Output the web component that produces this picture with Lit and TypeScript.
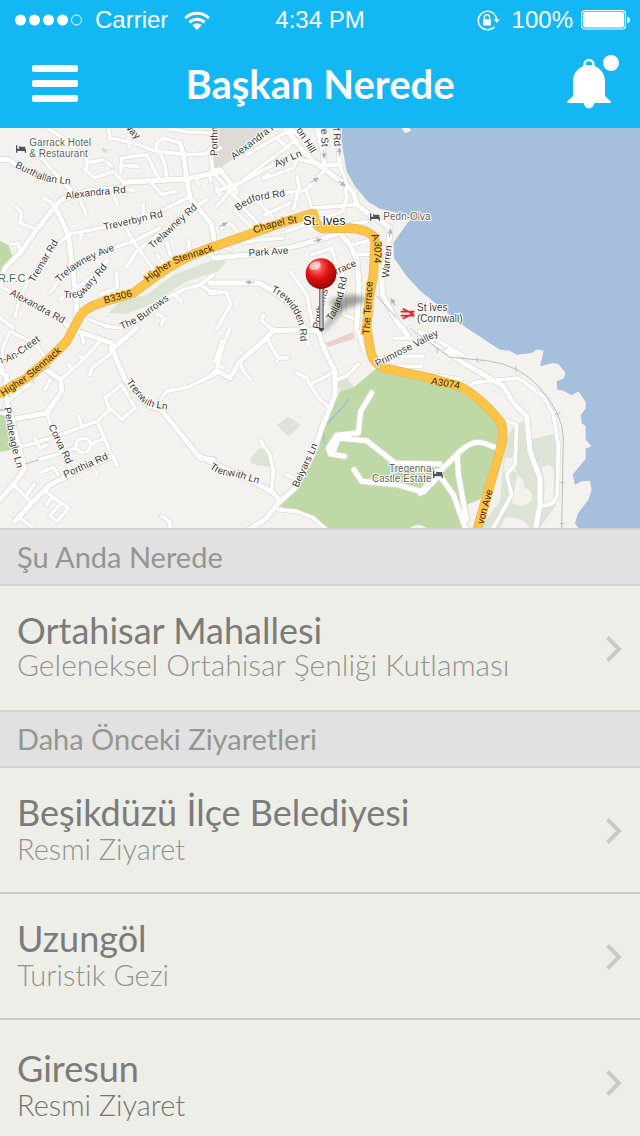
import { LitElement, html, svg, css } from "lit";
import { customElement, property } from "lit/decorators.js";

/* ---------- map data: the drawing uses a 1920 x 1200 grid ---------- */

interface Tile {
  x: number;
  y: number;
  major: string;
  minor: string;
}

const tiles: Tile[] = [
  {
    x: 0,
    y: 0,
    major:
      "M0 470L15 420L60 375L110 305L165 235L185 215L260 190L360 180 M165 235L205 320L212 380L225 480L232 580 M370 163L480 157L560 153L665 130 M540 45L550 80L560 150L570 210L635 290L648 370 M0 95L22 93L60 118L130 145L190 160L215 190",
    minor:
      "M0 475L100 525L180 575L210 600 M110 75L215 190L240 215L258 258 M130 210L150 220L165 235 M110 305L60 285L65 255L48 237 M60 370L55 345L35 348 M205 320L300 300L480 250L560 210 M205 320L150 370L90 450L60 510L45 565 M150 495L190 440L320 365L400 340L480 300 M180 515L270 450L325 395 M245 320L240 338 M375 295L400 340L465 430 M378 420L410 370L430 355L580 240L620 215 M430 228L430 255 M350 435L352 480L300 500 M470 380L490 405 M500 345L513 385 M565 338L570 365 M340 195L352 228 M370 160L376 200 M374 182L402 188 M370 163L340 130L285 150L255 125L265 105L310 95L335 115 M362 135L365 90L440 80L475 150 M362 112L415 115 M140 0L190 30L265 100 M325 0L330 30L400 45L470 70L560 80L610 78L660 60 M470 70L470 45L490 30L540 45 M480 75L495 110L500 150 M455 165L485 200L530 190 M500 0L560 12L640 15 M590 155L595 170 M630 145L632 160 M385 20L388 55 M0 570L40 600 M270 575L320 595L370 600L440 560L500 510L550 485L600 470L640 440 M600 470L630 490L660 490 M525 500L545 522 M470 558L492 568L485 590",
  },
  {
    x: 630,
    y: 0,
    major:
      "M5 130L30 125L80 190 M345 125L400 165L430 190L440 230L480 260L540 300L535 370L515 440L517 500L560 580L600 630 M0 375L12 390L120 380L240 358L330 335L390 315 M390 315L420 350L440 390L447 470L440 605 M0 465L150 465L190 490L255 540L282 600 M225 0L280 70L318 105L345 125 M320 0L338 60L345 125",
    minor:
      "M20 235L70 180L160 110L260 35 M110 80L250 0 M0 60L8 130L60 190L105 235 M20 190L100 160L180 115L270 75 M160 152L250 120L262 92L310 105L345 115 M75 250L180 200L260 190L290 185L345 125 M160 150L175 140 M375 0L385 60L388 110L405 150L410 210L400 245 M345 112L395 110 M290 190L305 240 M310 240L440 230 M262 145L267 180L250 245 M80 255L125 300 M100 240L150 292 M140 215L190 270 M160 262L240 225 M30 200L20 180 M35 300L60 285L82 310 M20 345L60 365 M100 345L150 335L218 330 M230 310L340 270L400 250 M425 350L490 335 M430 380L490 378 M305 380L365 360L378 405 M240 430L290 500L310 600 M0 497L50 492L62 530L22 600 M160 560L155 580L190 605 M398 440L402 560L440 575 M250 10L290 40 M200 30L235 60 M412 170L435 205 M420 290L470 280 M465 605L470 590",
  },
  {
    x: 630,
    y: 600,
    major:
      "M170 30L190 8L280 5L325 10L345 70L375 130L375 200L335 300L312 370L255 480L205 525L170 570L110 610 M0 145L20 128L60 150L90 100L170 30 M-30 385L60 430L130 460L190 495L210 520 M485 195L452 250L445 315L380 322L355 360L362 378L403 385 M372 365L385 330L470 338L555 405L690 408 M432 425L455 460L560 470L640 492L690 440",
    minor:
      "M20 125L40 50L60 0 M170 30L205 90L235 90 M205 88L200 102 M90 100L100 130L122 155 M260 135L290 150L300 170L330 215L360 240 M300 170L340 150L365 135 M378 155L410 145L445 108 M152 338L180 380L190 430L185 480 M228 440L262 455 M205 545L260 550L310 570L355 610 M290 0L294 52 M440 0L463 72 M448 30L463 20 M553 32L590 30L582 0 M560 85L640 85 M560 115L635 115 M600 0L690 60",
  },
  {
    x: 1260,
    y: 600,
    major:
      "M0 495L50 440L120 370Q160 335 190 345L230 360 M112 385L115 440L140 575 M50 430L100 500L140 610 M80 70L130 105L210 150L250 175L280 225L320 265L330 370L360 450L360 530L345 610",
    minor:
      "M150 172L165 163L295 150L370 205L400 260L415 350L412 500Q405 535 365 533 M85 68L130 82L50 35L0 10 M258 278L290 290L285 410L260 440L275 500L220 600 M50 142L125 155",
  },
  {
    x: 0,
    y: 600,
    major:
      "M0 130L20 145L15 200L35 270L60 370L75 420L40 470L0 515 M335 60L375 155L400 190L450 235L480 240L600 390L640 395 M235 10L335 45L335 65L410 0 M335 385L240 425L150 470L95 525L45 580 M35 275L140 255L185 190L182 155L130 120",
    minor:
      "M5 130L8 60L30 10L110 50L130 80 M182 155L250 95L300 40 M270 140L275 120L335 75 M475 225L500 190L570 175L650 135 M668 120L645 100L665 40 M365 170L315 210L330 245L290 280L180 320L90 350L60 355 M370 180L405 240L365 275L330 240 M290 280L335 380L352 412 M235 265L245 292 M140 255L160 310L195 390L210 420 M118 395L230 360 M275 348L305 335 M272 352A22 22 0 1 1 228 352A22 22 0 1 1 272 352 M105 330L118 360L145 350 M40 470L95 525 M125 432L160 418L175 440 M280 420L292 440 M75 508L103 468 M135 490L205 540L172 580L150 562L185 525 M155 510L140 530 M60 570L100 600 M485 565L508 580L512 610 M245 15L250 45 M205 108L215 122 M238 83L252 95 M135 185L150 155 M30 215L110 150",
  },
];

const highway =
  "M-10 800L80 750L150 690L200 640L240 565Q255 540 300 525L400 495L460 450Q540 390 630 360L730 325L860 280L940 256Q948 302 975 302L1050 300Q1128 308 1125 345L1120 440L1108 510L1100 600L1112 670Q1120 710 1160 722L1290 750L1370 772Q1410 785 1470 845L1500 880Q1514 900 1505 950L1450 1140L1430 1210";

interface Label {
  text: string;
  d: string;
  kind?: string;
}

const labels: Label[] = [
  { text: "Garrack Hotel", d: "M88 54H400", kind: "place" },
  { text: "& Restaurant", d: "M88 86H400", kind: "place" },
  { text: "Burthallan Ln", d: "M44 118L110 150Q150 168 260 172" },
  { text: "Alexandra Rd", d: "M197 214L280 203L420 191" },
  { text: "Way", d: "M368 -8L450 80" },
  { text: "Porthm", d: "M652 84L654 -60" },
  { text: "Treverbyn Rd", d: "M313 307L560 250" },
  { text: "Trelawney Rd", d: "M457 364L620 215" },
  { text: "Trelawney Ave", d: "M178 464Q230 412 300 384L400 345" },
  { text: "Tremar Rd", d: "M102 465L200 300" },
  { text: "Tregwary Rd", d: "M190 508Q238 516 265 486L350 385" },
  { text: "Alexandra Rd", d: "M28 500L240 615" },
  { text: "R.F.C", d: "M-6 462H120", kind: "club" },
  { text: "B3306", d: "M314 527L460 488", kind: "road" },
  { text: "Higher Stennack", d: "M444 464Q500 415 560 395L700 350", kind: "road" },
  { text: "The Burrows", d: "M365 605L420 580L560 475" },
  { text: "Alexandra Rd", d: "M702 96L880 -40" },
  { text: "Ayr Ln", d: "M828 118L960 60" },
  { text: "on Hill", d: "M888 6L960 120" },
  { text: "ve St", d: "M962 -12L968 120" },
  { text: "f Rd", d: "M1000 0L1006 120" },
  { text: "Bedford Rd", d: "M714 250Q750 220 790 214L920 196" },
  { text: "Chapel St", d: "M765 318Q800 298 900 282", kind: "road" },
  { text: "St. Ives", d: "M910 292H1150", kind: "town" },
  { text: "Park Ave", d: "M746 385L940 372" },
  { text: "A3074", d: "M1113 322L1124 345L1120 480", kind: "road" },
  { text: "Warren", d: "M1166 450L1180 300" },
  { text: "The Terrace", d: "M1108 620L1122 400", kind: "road" },
  { text: "Trewidden Rd", d: "M812 490Q880 520 898 600L905 700" },
  { text: "rrace", d: "M1009 440L1110 395" },
  { text: "Talland Rd", d: "M994 580Q1035 530 1046 400" },
  { text: "Porthrms", d: "M958 604L970 540L990 460" },
  { text: "Pedn-Olva", d: "M1150 277H1400", kind: "place" },
  { text: "St Ives", d: "M1251 549H1400" },
  { text: "(Cornwall)", d: "M1251 582H1450" },
  { text: "h-An-Creet", d: "M-6 708Q40 700 70 675L160 610" },
  { text: "Higher Stennack", d: "M10 806L90 752L240 625", kind: "road" },
  { text: "Penbeagle Ln", d: "M12 840L30 940L60 1060" },
  { text: "Corva Rd", d: "M145 895L220 1050" },
  { text: "Porthia Rd", d: "M196 1050L380 968" },
  { text: "Trenwith Ln", d: "M378 762Q430 836 460 838L560 855" },
  { text: "Trenwith Ln", d: "M628 1020Q660 1045 700 1044L800 1075" },
  { text: "Belyars Ln", d: "M894 1080L980 895" },
  { text: "Primrose Valley", d: "M1132 717L1350 605" },
  { text: "Tregenna", d: "M1167 1031H1400", kind: "place" },
  { text: "Castle Estate", d: "M1116 1063H1400", kind: "place" },
  { text: "A3074", d: "M1292 768L1450 796", kind: "road" },
  { text: "von Ave", d: "M1450 1190L1490 1044", kind: "road" },
];

const bed = (x: number, y: number) => svg`
  <path transform="translate(${x} ${y})" class="bed"
    d="M0 0H4V10H10V4H28V12H30V22H26V17H4V22H0Z M9 3H13V8H9Z" />`;

const arrow = (x: number, y: number, r: number) => svg`
  <path transform="translate(${x} ${y}) rotate(${r})" class="arrow" d="M-12 0H6M0 -5L12 0L0 5Z" />`;

@customElement("town-map")
export class TownMap extends LitElement {
  static styles = css`
    :host { display: block; }
    .map { display: block; width: 100%; height: auto; background: #f3f2ee; }
    .sea { fill: #a5bfdd; }
    .park { fill: #bed9a6; }
    .pale { fill: #dce5d5; }
    .land { fill: #f3f2ee; }
    .block { fill: #dedbd7; }
    .building { fill: #ebcfcd; }
    .line { fill: none; stroke-linecap: round; stroke-linejoin: round; }
    .case { stroke: #dedad2; }
    .case.major { stroke-width: 20; }
    .case.minor { stroke-width: 15; }
    .fill { stroke: #fff; }
    .fill.major { stroke-width: 15; }
    .fill.minor { stroke-width: 11; }
    .hw-case { stroke: #ecb45c; stroke-width: 28; }
    .hw { stroke: #ffc345; stroke-width: 24; }
    .rail { stroke: #bdbdb9; stroke-width: 3; }
    .stream { stroke: #9dbbe6; stroke-width: 4; }
    .label {
      font: 30px "Liberation Sans", Arial, sans-serif;
      fill: #3a3633;
      stroke: #fff;
      stroke-width: 6;
      stroke-linejoin: round;
      paint-order: stroke;
    }
    .label.place { fill: #675c51; }
    .label.club { fill: #40664f; font-size: 33px; }
    .label.road { fill: #35240a; stroke: #ffc345; }
    .label.town { fill: #222; font-size: 38px; }
    .bed { fill: #4c5268; stroke: #fff; stroke-width: 3; paint-order: stroke; }
    .arrow { fill: #a9b3c3; stroke: #a9b3c3; stroke-width: 3; }
    .station { fill: none; stroke: #e5232e; stroke-width: 5; }
    .shadow { fill: #000; opacity: 0.35; filter: blur(8px); }
  `;

  private roads(kind: "case" | "fill") {
    return tiles.map(
      (t) => svg`<g transform="translate(${t.x} ${t.y})">
        <path class="line ${kind} minor" d=${t.minor} />
        <path class="line ${kind} major" d=${t.major} />
      </g>`
    );
  }

  render() {
    return html`
      <svg class="map" viewBox="0 0 1920 1200" role="img" aria-label="St. Ives">
        <defs>
          <radialGradient id="ball" cx="0.38" cy="0.28" r="0.75">
            <stop offset="0" stop-color="#ffb9b0" />
            <stop offset="0.22" stop-color="#f4524a" />
            <stop offset="0.5" stop-color="#e01312" />
            <stop offset="1" stop-color="#940302" />
          </radialGradient>
          <linearGradient id="needle">
            <stop offset="0" stop-color="#5c5f62" />
            <stop offset="0.45" stop-color="#d9dbdd" />
            <stop offset="1" stop-color="#55585b" />
          </linearGradient>
          ${labels.map((l, i) => svg`<path id="label-${i}" d=${l.d} />`)}
        </defs>
        <path class="block" d="M632 0H810L730 70L660 122L640 116Z" />
        <path class="block" d="M305 58L325 66L318 76L306 70Z" />
        <path class="park" d="M0 338L25 352L38 385L15 422L0 440Z M0 860L20 865L35 965L0 972Z" />
        <path class="pale" d="M325 555L360 520L440 500L520 440L600 410L650 392L680 400L655 430L560 460L450 530L380 557Z M318 565L330 560L328 568Z M830 890L865 866L902 892L865 926Z M750 990L780 960L808 972L815 1018L755 1008Z" />
        <path class="pale" d="M1545 890L1572 880L1588 935L1660 918L1672 960L1668 1130L1620 1200H1440L1500 1120L1515 940Z" />
        <path class="land" d="M1552 1042Q1575 1050 1572 1080Q1600 1085 1595 1115Q1570 1145 1535 1125Z M1625 1020Q1650 1000 1662 1025L1660 1125L1630 1125Q1640 1070 1625 1020Z M1515 1170Q1560 1160 1590 1200H1500Z M1510 1030L1550 1030L1540 990L1515 990Z" />
        <path class="park" d="M1130 720L1062 778L1020 790L1005 820L945 970L890 1060L838 1135L900 1155L950 1175L985 1200H1385L1388 1190L1400 1130L1450 1110L1505 950L1500 880L1380 775Z" />
        <path class="land" d="M1400 1130L1448 1120L1425 1200H1385Z M1230 1200Q1255 1180 1280 1200Z" />
        <path class="pale" d="M1012 764L1042 750L1062 776L1020 790Z" />
        <path class="building" d="M978 645L1060 612L1063 632L985 657Z" />
        <path class="line stream" d="M1048 812L1025 840L970 900V920L974 946M0 846H14" />
        <path class="sea" d="M1024 0L1026 50L1040 130L1065 175L1105 222L1140 242L1225 262Q1240 272 1222 285L1180 345L1182 390L1220 445L1262 490L1400 600L1500 665L1530 668L1550 680L1595 675L1610 664L1631 668L1620 715L1660 705L1675 708L1697 735L1690 752L1670 760L1672 785L1690 788L1715 802L1735 790L1757 822L1757 842L1742 860L1745 885L1757 895L1757 935L1775 955L1757 962L1757 992L1718 1040L1725 1070L1745 1060L1770 1058L1775 1085L1765 1115L1735 1155L1725 1185L1735 1200H1920V0Z" />
        <path class="land" d="M1205 0L1215 16L1234 8L1228 0Z" />
        ${this.roads("case")}
        ${this.roads("fill")}
        <path class="line rail" d="M1130 504L1190 570M1230 600L1350 688L1460 698Q1560 710 1620 780Q1690 860 1690 930L1685 1200M1680 1063H1692M1312 660V674M1432 690V704M1548 716V732M1665 860L1680 854M1680 1186H1692M75 1008L115 996M95 765L118 735L150 715" />
        <path class="line hw-case" d=${highway} />
        <path class="line hw" d=${highway} />
        ${arrow(750, 463, 180)} ${arrow(944, 157, -35)} ${arrow(1026, 166, 40)}
        ${arrow(972, 78, 85)} ${arrow(1018, 72, -90)} ${arrow(952, 337, -14)}
        ${arrow(1170, 315, -80)} ${arrow(1180, 523, -120)} ${arrow(670, 290, -25)}
        ${bed(48, 52)} ${bed(1110, 256)} ${bed(1299, 1028)}
        ${labels.map(
          (l, i) => svg`<text class="label ${l.kind ?? ""}"><textPath href="#label-${i}">${l.text}</textPath></text>`
        )}
        <path class="station" d="M1202 551H1244M1202 563H1244M1208 542L1238 557L1208 572" />
        <ellipse class="shadow" cx="1042" cy="520" rx="52" ry="18" transform="rotate(-8 1042 520)" />
        <path class="shadow" d="M966 606L1020 528L1040 536L972 612Z" />
        <rect x="957" y="475" width="14" height="132" rx="5" fill="url(#needle)" />
        <path d="M957 600H971V606L964 611L957 606Z" fill="#444" />
        <circle cx="963" cy="437" r="46" fill="url(#ball)" />
        <ellipse cx="945" cy="413" rx="18" ry="12" fill="#fff" opacity="0.6" transform="rotate(-25 945 413)" />
      </svg>
    `;
  }
}

@customElement("status-bar")
export class StatusBar extends LitElement {
  static styles = css`
    :host {
      display: grid;
      grid-template-columns: 1fr auto 1fr;
      align-items: center;
      height: 40px;
      padding: 0 10px;
      color: #fff;
      font: 24px/40px "Liberation Sans", Arial, sans-serif;
    }
    .side { display: flex; align-items: center; }
    .left { gap: 13px; padding-left: 5px; }
    .wifi { margin-left: 3px; }
    .right { justify-content: flex-end; gap: 8px; }
    .lock { margin-right: 4px; }
    .icon { display: block; flex: none; }
  `;

  render() {
    return html`
      <div class="side left">
        <svg class="icon" width="67" height="12" viewBox="0 0 67 12" fill="#fff">
          <circle cx="5.5" cy="6" r="5.5" /><circle cx="19.5" cy="6" r="5.5" />
          <circle cx="33.5" cy="6" r="5.5" /><circle cx="47.5" cy="6" r="5.5" />
          <circle cx="61.5" cy="6" r="5" fill="none" stroke="#fff" />
        </svg>
        <span>Carrier</span>
        <svg class="icon wifi" width="26" height="19" viewBox="0 0 26 19" fill="none" stroke="#fff" stroke-width="3">
          <path d="M1.2 7.2A16.5 16.5 0 0 1 24.8 7.2" />
          <path d="M5.3 11.4A10.8 10.8 0 0 1 20.7 11.4" />
          <path d="M8.3 14.3A6.6 6.6 0 0 1 17.7 14.3L13 19Z" fill="#fff" stroke="none" />
        </svg>
      </div>
      <span>4:34 PM</span>
      <div class="side right">
        <svg class="icon lock" width="23" height="21" viewBox="0 0 23 21">
          <path d="M17.6 4.4A9.3 9.3 0 1 0 17.5 16.7M18 5A9.3 9.3 0 0 1 19.6 9.5" fill="none" stroke="#fff" stroke-width="1.5" />
          <path d="M16.5 9H23L19.8 13Z M6 9H14V15.5H6Z" fill="#fff" />
          <path d="M7.4 9.5V7.2A2.6 2.6 0 0 1 12.6 7.2V9.5" fill="none" stroke="#fff" stroke-width="1.4" />
        </svg>
        <span>100%</span>
        <svg class="icon" width="49" height="20" viewBox="0 0 49 20" fill="#fff">
          <rect x="0.6" y="0.6" width="43.8" height="18.4" rx="3" fill="none" stroke="#fff" stroke-width="1.2" />
          <rect x="2" y="2" width="41" height="15.6" rx="2" />
          <path d="M46 6.5Q49 7.5 49 10T46 13.3Z" />
        </svg>
      </div>
    `;
  }
}

@customElement("visit-row")
export class VisitRow extends LitElement {
  @property() name = "";
  @property() detail = "";

  static styles = css`
    :host { display: block; }
    .row {
      display: flex;
      justify-content: space-between;
      gap: 16px;
      min-height: 80px;
      padding: 22px 18px 22px 17px;
      color: #7b7c79;
      text-decoration: none;
    }
    .name { display: block; font-size: 36px; line-height: 44px; }
    .detail {
      display: block;
      color: var(--detail-color, #92938f);
      font-size: var(--detail-size, 29px);
      font-weight: 300;
      font-variant-ligatures: none;
      line-height: var(--detail-line, 30px);
    }
    .chevron { display: block; flex: none; margin-top: var(--chevron-top, 28px); }
  `;

  render() {
    return html`
      <a class="row" href="#">
        <span>
          <span class="name">${this.name}</span>
          <span class="detail">${this.detail}</span>
        </span>
        <svg class="chevron" width="16" height="26" viewBox="0 0 16 26">
          <path d="M1.5 1.5L13 13L1.5 24.5" fill="none" stroke="#c9c9c9" stroke-width="4" />
        </svg>
      </a>
    `;
  }
}

@customElement("app-root")
export class AppRoot extends LitElement {
  static styles = css`
    :host {
      display: block;
      height: 100vh;
      overflow: hidden;
      background: #eeeee9;
      font-family: Lato, "Open Sans", sans-serif;
    }
    .top { background: #13b7f3; color: #fff; }
    .bar {
      display: grid;
      grid-template-columns: 80px 1fr 80px;
      align-items: center;
      height: 88px;
      padding: 0 15px;
    }
    .title { margin: 0; font-size: 40px; font-weight: 700; line-height: 48px; text-align: center; }
    .button {
      display: grid;
      place-items: center;
      height: 80px;
      padding: 0;
      border: 0;
      background: none;
    }
    .alerts { justify-items: end; padding: 0 6px 4px 0; }
    .group {
      height: 54px;
      margin: 0;
      padding: 0 17px;
      border: solid #d3d3d3;
      border-width: 2px 0;
      background: #e1e1e1;
      color: #959691;
      font-size: 29px;
      font-weight: 400;
      line-height: 54px;
    }
    .list { margin: 0; padding: 0; list-style: none; }
    .item + .item { border-top: 2px solid #cacaca; }
    .current { --detail-line: 24px; --detail-size: 30px; }
    .last { padding-top: 4px; --detail-color: #747572; --chevron-top: 24px; }
  `;

  render() {
    return html`
      <header class="top">
        <status-bar></status-bar>
        <div class="bar">
          <button class="button" aria-label="Menü">
            <svg width="46" height="38" viewBox="0 0 46 38" fill="#fff">
              <rect y="0" width="46" height="7" rx="2" />
              <rect y="15" width="46" height="7" rx="2" />
              <rect y="30" width="46" height="7" rx="2" />
            </svg>
          </button>
          <h1 class="title">Başkan Nerede</h1>
          <button class="button alerts" aria-label="Bildirimler">
            <svg width="52" height="54" viewBox="0 0 52 54" fill="#fff">
              <circle cx="44" cy="8" r="8" />
              <circle cx="22" cy="9.5" r="4.5" fill="none" stroke="#fff" stroke-width="2.4" />
              <path d="M22 10C31 10 38 17 38 26V41L43.5 46Q45 48 43 48H1Q-1 48 .5 46L6 41V26C6 17 13 10 22 10Z" />
              <path d="M16.5 47H27.5A5.5 6.5 0 0 1 16.5 47Z" />
            </svg>
          </button>
        </div>
      </header>
      <town-map></town-map>
      <main>
        <section>
          <h2 class="group">Şu Anda Nerede</h2>
          <ul class="list">
            <li class="item current">
              <visit-row name="Ortahisar Mahallesi" detail="Geleneksel Ortahisar Şenliği Kutlaması"></visit-row>
            </li>
          </ul>
        </section>
        <section>
          <h2 class="group">Daha Önceki Ziyaretleri</h2>
          <ul class="list">
            <li class="item"><visit-row name="Beşikdüzü İlçe Belediyesi" detail="Resmi Ziyaret"></visit-row></li>
            <li class="item"><visit-row name="Uzungöl" detail="Turistik Gezi"></visit-row></li>
            <li class="item last"><visit-row name="Giresun" detail="Resmi Ziyaret"></visit-row></li>
          </ul>
        </section>
      </main>
    `;
  }
}
